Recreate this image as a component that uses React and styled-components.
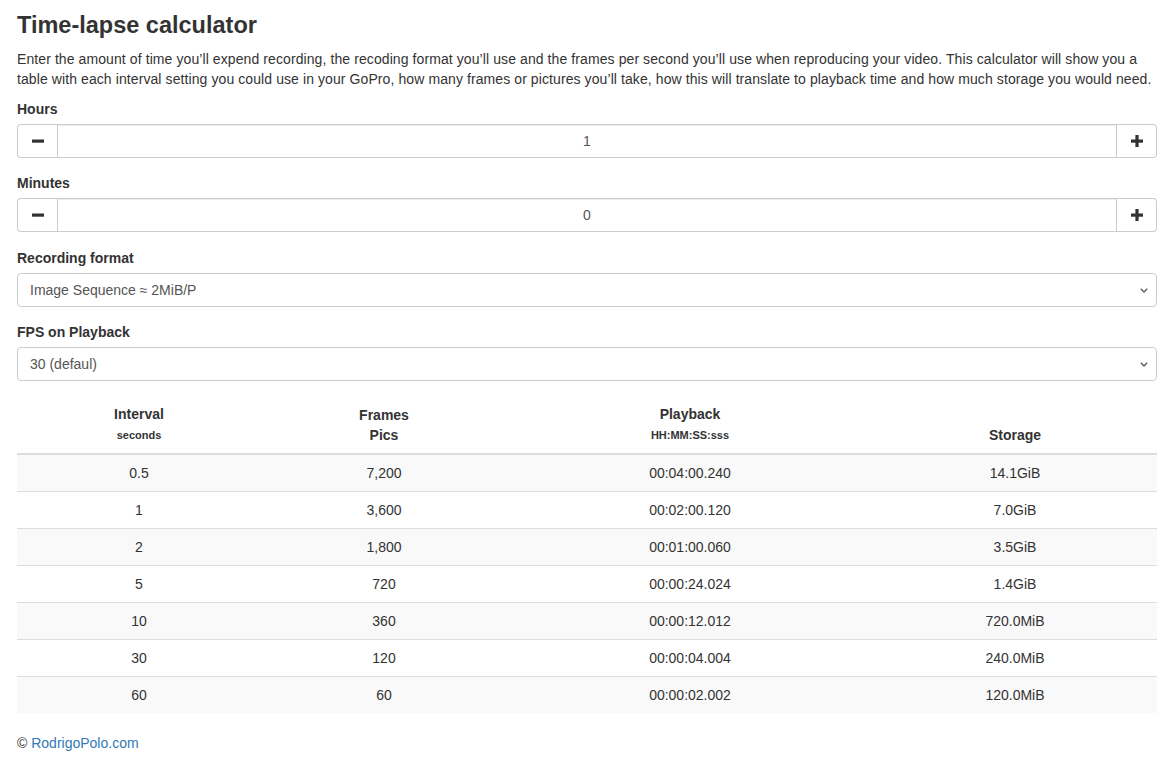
import React from "react";
import styled, { createGlobalStyle } from "styled-components";

const Global = createGlobalStyle`
  html, body { margin: 0; padding: 0; background: #fff; }
  body {
    font-family: "Liberation Sans", Arial, Helvetica, sans-serif;
    font-size: 14px;
    line-height: 20px;
    color: #333;
  }
  * { box-sizing: border-box; }
`;

const Page = styled.div`
  padding: 12px 17px 0 17px;
  display: flex;
  flex-direction: column;
`;

const Title = styled.h1`
  margin: 0 0 11px 0;
  font-size: 23.5px;
  line-height: 26px;
  font-weight: bold;
  color: #333;
`;

const Lead = styled.p`
  margin: 0 0 10px 0;
  letter-spacing: 0.09px;
`;

const FormGroup = styled.div`
  display: flex;
  flex-direction: column;
  margin-bottom: ${(p) => p.$gap || "15.4px"};
`;

const Label = styled.label`
  font-weight: bold;
  margin-bottom: 5px;
  line-height: 20px;
`;

const InputGroup = styled.div`
  display: flex;
  height: 34px;
`;

const StepButton = styled.button`
  width: 40px;
  flex: none;
  border: 1px solid #ccc;
  background: #fff;
  display: flex;
  align-items: center;
  justify-content: center;
  padding: 0;
  border-radius: ${(p) => (p.$side === "left" ? "4px 0 0 4px" : "0 4px 4px 0")};
  ${(p) => (p.$side === "left" ? "border-right: none;" : "border-left: none;")}
`;

const NumberInput = styled.input`
  flex: 1;
  min-width: 0;
  border: 1px solid #ccc;
  text-align: center;
  font-family: inherit;
  font-size: 14px;
  color: #555;
  padding: 6px 12px;
  outline: none;
  box-shadow: inset 0 1px 1px rgba(0, 0, 0, 0.075);
`;

const SelectWrap = styled.div`
  position: relative;
  height: 34px;
`;

const Select = styled.select`
  appearance: none;
  -webkit-appearance: none;
  width: 100%;
  height: 34px;
  border: 1px solid #ccc;
  border-radius: 4px;
  background: #fff;
  font-family: inherit;
  font-size: 14px;
  color: #555;
  padding: 6px 12px;
  outline: none;
`;

const Chevron = styled.svg`
  position: absolute;
  right: 9px;
  top: 15px;
  pointer-events: none;
`;

const Table = styled.table`
  width: 100%;
  border-collapse: collapse;
  border-spacing: 0;
  table-layout: fixed;
  margin-bottom: 20px;
`;

const Th = styled.th`
  padding: 8px;
  text-align: center;
  vertical-align: bottom;
  font-weight: bold;
  line-height: 20px;
  border-bottom: 2px solid #ddd;
`;

const Small = styled.small`
  font-size: 11px;
`;

const Row = styled.tr`
  background: ${(p) => (p.$striped ? "#f9f9f9" : "#fff")};
`;

const Td = styled.td`
  padding: 8px;
  text-align: center;
  line-height: 20px;
  border-top: ${(p) => (p.$first ? "none" : "1px solid #ddd")};
`;

const Footer = styled.footer`
  line-height: 20px;
`;

const Link = styled.a`
  color: #337ab7;
  text-decoration: none;
`;

const Minus = () => (
  <svg width="12" height="12" viewBox="0 0 12 12">
    <rect x="0" y="4.5" width="12" height="3.2" fill="#333" />
  </svg>
);

const Plus = () => (
  <svg width="12" height="12" viewBox="0 0 12 12">
    <rect x="0" y="4.5" width="12" height="3.2" fill="#333" />
    <rect x="4.4" y="0" width="3.2" height="12" fill="#333" />
  </svg>
);

const ChevronIcon = () => (
  <Chevron width="8" height="5" viewBox="0 0 8 5">
    <path d="M0.8 0.8 L4 4 L7.2 0.8" fill="none" stroke="#555" strokeWidth="1.3" />
  </Chevron>
);

const Stepper = ({ value }) => (
  <InputGroup>
    <StepButton $side="left" aria-label="minus"><Minus /></StepButton>
    <NumberInput readOnly value={value} />
    <StepButton $side="right" aria-label="plus"><Plus /></StepButton>
  </InputGroup>
);

const rows = [
  ["0.5", "7,200", "00:04:00.240", "14.1GiB"],
  ["1", "3,600", "00:02:00.120", "7.0GiB"],
  ["2", "1,800", "00:01:00.060", "3.5GiB"],
  ["5", "720", "00:00:24.024", "1.4GiB"],
  ["10", "360", "00:00:12.012", "720.0MiB"],
  ["30", "120", "00:00:04.004", "240.0MiB"],
  ["60", "60", "00:00:02.002", "120.0MiB"],
];

export default function App() {
  return (
    <>
      <Global />
      <Page>
        <Title>Time-lapse calculator</Title>
        <Lead>
          Enter the amount of time you’ll expend recording, the recoding format you’ll use and the frames per second you’ll use when reproducing your video. This calculator will show you a table with each interval setting you could use in your GoPro, how many frames or pictures you’ll take, how this will translate to playback time and how much storage you would need.
        </Lead>
        <FormGroup>
          <Label>Hours</Label>
          <Stepper value="1" />
        </FormGroup>
        <FormGroup>
          <Label>Minutes</Label>
          <Stepper value="0" />
        </FormGroup>
        <FormGroup>
          <Label>Recording format</Label>
          <SelectWrap>
            <Select defaultValue="img">
              <option value="img">Image Sequence ≈ 2MiB/P</option>
            </Select>
            <ChevronIcon />
          </SelectWrap>
        </FormGroup>
        <FormGroup $gap="14.4px">
          <Label>FPS on Playback</Label>
          <SelectWrap>
            <Select defaultValue="30">
              <option value="30">30 (defaul)</option>
            </Select>
            <ChevronIcon />
          </SelectWrap>
        </FormGroup>
        <Table>
          <colgroup>
            <col style={{ width: "244px" }} />
            <col style={{ width: "246px" }} />
            <col style={{ width: "366px" }} />
            <col style={{ width: "284px" }} />
          </colgroup>
          <thead>
            <tr>
              <Th>Interval<br /><Small>seconds</Small></Th>
              <Th>Frames<br />Pics</Th>
              <Th>Playback<br /><Small>HH:MM:SS:sss</Small></Th>
              <Th>Storage</Th>
            </tr>
          </thead>
          <tbody>
            {rows.map((r, i) => (
              <Row key={i} $striped={i % 2 === 0}>
                {r.map((c, j) => (
                  <Td key={j} $first={i === 0}>{c}</Td>
                ))}
              </Row>
            ))}
          </tbody>
        </Table>
        <Footer>
          © <Link href="#">RodrigoPolo.com</Link>
        </Footer>
      </Page>
    </>
  );
}
